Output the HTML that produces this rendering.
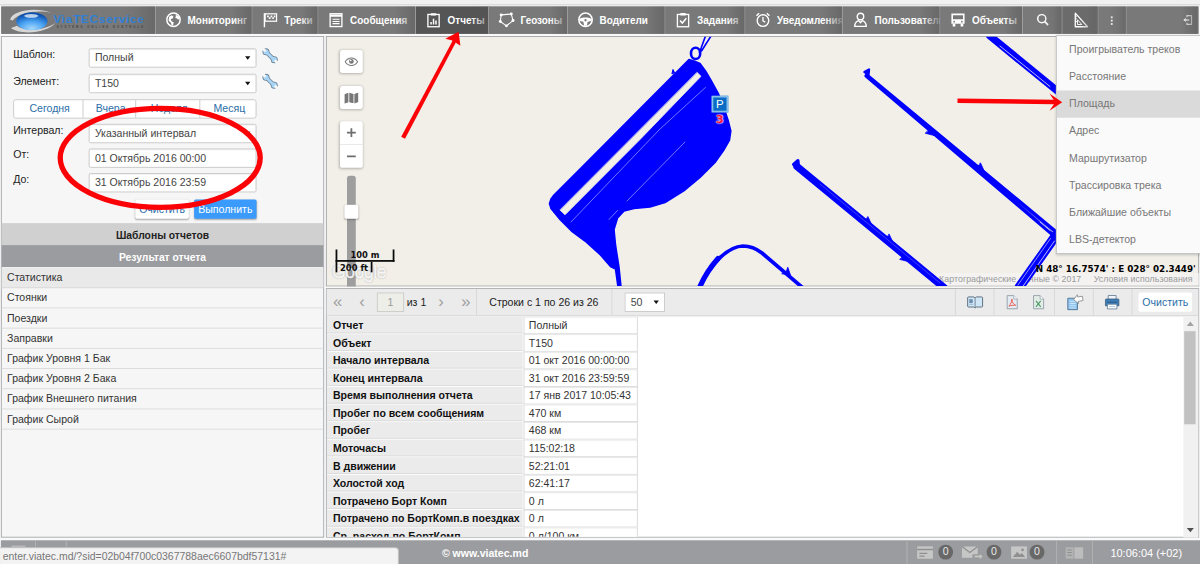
<!DOCTYPE html>
<html lang="ru"><head><meta charset="utf-8"><title>ViaTEC service</title>
<style>
html,body{margin:0;padding:0;width:1200px;height:564px;overflow:hidden;background:#f1f1f1}
#w{position:absolute;left:0;top:0;width:1366px;height:642px;transform:scale(.87848);transform-origin:0 0;font:12px "Liberation Sans",Arial,sans-serif;color:#333;background:#f9f9f9;overflow:hidden}
#w *{box-sizing:border-box}
.a{position:absolute}
#hd{left:1px;top:7px;width:1363px;height:31px;background:#767676;transform:translate(.5px,.45px)}
.hi{position:absolute;top:0;height:31px;border-right:1px solid #a4a4a4;background:linear-gradient(to right,#797979 0,#797979 78%,#6c6c6c 100%);color:#fff;font-weight:bold;font-size:13px;line-height:31px;overflow:hidden;white-space:nowrap}
.hi:after{content:"";position:absolute;right:0;top:0;width:20px;height:31px;background:linear-gradient(to right,rgba(108,108,108,0),rgba(108,108,108,.45) 55%,rgba(104,104,104,.8))}
.hi.act:after{background:linear-gradient(to right,rgba(84,84,84,0),rgba(84,84,84,.35) 55%,rgba(84,84,84,.7))}
.hi.opn{background:linear-gradient(to right,#6c6c6c 0,#6a6a6a 70%,#606060 100%)}
.hi.act{background:#555}
.hi svg{position:absolute;left:10px;top:5px;width:20px;height:20px}
.hi span{position:absolute;left:36px;top:0;display:inline-block;transform:scaleX(.87);transform-origin:0 50%}
#lp{left:1px;top:41px;width:368px;height:571px;border:1px solid #a3a6aa;background:#f6f6f6}
.lb{position:absolute;left:15px;transform:translateY(.3px);height:22px;line-height:22px;font-size:12px;color:#222}
.sel,.inp{position:absolute;left:101px;width:191px;height:22px;background:#fff;border:1px solid #c6c6c6;border-radius:2px;line-height:20px;padding-left:6px;color:#444;box-shadow:inset 0 1px 1px rgba(0,0,0,.07);white-space:nowrap}
.sel:after{content:"";position:absolute;right:6px;top:8px;border:3.500px solid transparent;border-top:4.500px solid #111;border-bottom:0}
.bg{position:absolute;left:15px;top:113px;width:277px;height:22px;background:#fff;border:1px solid #c6c6c6;border-radius:3px;color:#2b6ea8;line-height:20px;font-size:12px}
.bg i{position:absolute;top:0;height:20px;font-style:normal;text-align:center;padding-left:3px;border-right:1px solid #c6c6c6}
.btn{position:absolute;height:22px;line-height:22px;text-align:center;border-radius:2px;font-size:12px;box-shadow:0 1px 2px rgba(0,0,0,.3)}
.bar{position:absolute;left:2px;width:366px;height:25px;line-height:27px;text-align:center;font-weight:bold;font-size:11.750px;overflow:hidden}
.li{position:absolute;left:2px;width:366px;height:23px;line-height:22px;padding-left:6px;border-bottom:1px solid #d9d9d9;color:#333}
#map{left:371px;top:41px;width:994px;height:285px;background:#f2efe9;border:1px solid #a0a3a7;border-bottom-color:#b2b2b2;overflow:hidden}
.mb{position:absolute;left:387px;width:26px;background:#fff;border-radius:3px;box-shadow:0 1px 3px rgba(0,0,0,.25)}
#rp{left:371px;top:328px;width:994px;height:284px;border:1px solid #a6a9ad;background:#fff;overflow:hidden}
#tb{left:372px;top:329px;width:992px;height:31px;background:#ebebeb;border-bottom:1px solid #d2d2d2}
.sp{position:absolute;top:329px;width:1px;height:30px;background:#d6d6d6}
.pg{position:absolute;top:331px;height:26px;line-height:26px;color:#a0a0a0;font-size:19px}
.r{position:absolute;left:0;height:20px;line-height:20px;width:354px}
.r b{position:absolute;left:0;top:0;width:223px;height:19px;background:#ebebeb;padding-left:7px;border-bottom:1px solid #dadada;color:#111;line-height:20px}
.r u{position:absolute;left:224px;top:0;width:130px;height:19.500px;background:#fff;padding-left:5px;text-decoration:none;border:1px solid #d6d6d6;border-top-color:#e4e4e4;color:#333;line-height:18px}
#bb{left:1px;top:615px;width:1366px;height:28px;background:#9b9c9f;color:#fff}
#mn{left:1202px;top:40px;width:166px;height:249px;background:#fafafa;border:1px solid #bfbfbf;box-shadow:0 1px 3px rgba(0,0,0,.2);color:#777;font-size:12px}
#mn div{position:absolute;left:0;width:166px;height:31px;line-height:31px;padding-left:14px}
</style></head><body>
<div id="w">
<div class="a" style="left:0;top:0;width:1366px;height:5.600px;background:#f1f1f1;border-bottom:1px solid #cdcdcd"></div>
<div class="a" id="hd">
<div class="hi" style="left:0px;width:176px"><svg style="left:5px;top:0;width:66px;height:30px" viewBox="0 0 66 30">
<defs><radialGradient id="lg" cx="50%" cy="90%" r="80%"><stop offset="0" stop-color="#a6d8ff"/><stop offset=".5" stop-color="#4aa3f2"/><stop offset="1" stop-color="#0a50b0"/></radialGradient></defs>
<path d="M5 15C7 4 35 0 52 7 37 3.5 14 6.5 8 16z" fill="#d6d6d6"/><path d="M6 24.500c9 8 42 6.5 51-6.5-8 9-37 11-44 4z" fill="#d6d6d6"/>
<ellipse cx="29.8" cy="16.8" rx="17.8" ry="10.3" fill="url(#lg)"/><ellipse cx="29" cy="10.6" rx="8" ry="2.2" fill="#fff" opacity=".7"/></svg>
<span style="left:58.500px;top:0;font-size:12px;letter-spacing:.7px;color:#2f80d6;font-weight:bold;transform:scaleX(1.130)">ViaTECservice</span>
<span style="left:63px;top:7.500px;font-size:3.100px;letter-spacing:2.400px;color:#2e2e2e;opacity:.72;transform:none">SYSTEMS ONLINE KONTROLE</span></div>
<div class="hi" style="left:176px;width:110px"><svg style="left:10px" viewBox="0 0 20 20"><circle cx="10" cy="10" r="7.6" fill="none" stroke="#fff" stroke-width="1.7"/><path d="M5 6.5 8 5l2 1.5-1 2.2-2.2.6L8 12l2.2 1-.6 3.2L8 17l-1-3.6-2.6-2.2zM12.5 4.2l3 1.5 1.5 3-1.8 1.2-1.4-1.5-1.8-.4.6-1.8z" fill="#fff"/></svg><span>Мониторинг</span></div>
<div class="hi" style="left:286px;width:75px"><svg style="left:10px" viewBox="0 0 20 20"><path d="M3.5 2.5v16" stroke="#fff" stroke-width="1.6" fill="none"/><rect x="4.3" y="3.3" width="13" height="8.4" fill="none" stroke="#fff" stroke-width="1.4"/><path d="M6.5 5.2h2v2h-2zM10.5 5.2h2v2h-2zM14.2 5.2h1.8v2h-1.8zM8.5 7.2h2v2h-2zM12.5 7.2h1.8v2h-1.8z" fill="#fff"/></svg><span>Треки</span></div>
<div class="hi" style="left:361px;width:111px"><svg style="left:10px" viewBox="0 0 20 20"><rect x="3.3" y="3.2" width="13.4" height="14.6" fill="none" stroke="#fff" stroke-width="1.5"/><path d="M3.3 5.4h13.4" stroke="#fff" stroke-width="2.6"/><path d="M6 9.5h8M6 12h8M6 14.5h8" stroke="#fff" stroke-width="1.3"/></svg><span>Сообщения</span></div>
<div class="hi act" style="left:472px;width:83px"><svg style="left:10px" viewBox="0 0 20 20"><rect x="3.6" y="4" width="12.8" height="14" fill="none" stroke="#fff" stroke-width="1.5"/><path d="M7 2.6h6v2.6H7z" fill="#fff"/><path d="M7.2 15.5v-3M10 15.5V9M12.8 15.5v-4.5" stroke="#fff" stroke-width="1.7"/></svg><span>Отчеты</span></div>
<div class="hi" style="left:555px;width:90px"><svg style="left:10px" viewBox="0 0 20 20"><path d="M4 4.5 15.5 3.5 17.5 11 10 17 3 12z" fill="none" stroke="#fff" stroke-width="1.2"/><g fill="#fff"><circle cx="4" cy="4.5" r="1.7"/><circle cx="15.5" cy="3.5" r="1.7"/><circle cx="17.5" cy="11" r="1.7"/><circle cx="10" cy="17" r="1.7"/><circle cx="3" cy="12" r="1.7"/></g></svg><span>Геозоны</span></div>
<div class="hi" style="left:645px;width:111px"><svg style="left:10px" viewBox="0 0 20 20"><circle cx="10" cy="10" r="7.6" fill="none" stroke="#fff" stroke-width="1.8"/><path d="M3 9.2c4-2.2 10-2.2 14 0l-.3 2.2-4.2.8-1 4.6h-3l-1-4.6-4.2-.8z" fill="#fff"/><circle cx="10" cy="10.6" r="1.3" fill="#777"/></svg><span>Водители</span></div>
<div class="hi" style="left:756px;width:91px"><svg style="left:10px" viewBox="0 0 20 20"><rect x="3.6" y="4" width="12.8" height="14" fill="none" stroke="#fff" stroke-width="1.5"/><path d="M7 2.4h6v2.8H7z" fill="#fff"/><path d="M6.6 11l2.6 2.8 4.6-5.4" fill="none" stroke="#fff" stroke-width="1.7"/></svg><span>Задания</span></div>
<div class="hi" style="left:847px;width:111px"><svg style="left:10px" viewBox="0 0 20 20"><circle cx="10" cy="11" r="6.6" fill="none" stroke="#fff" stroke-width="1.6"/><path d="M10 7v4.3l2.6 1.6" fill="none" stroke="#fff" stroke-width="1.5"/><path d="M2.6 5.4 5.6 2.6M17.4 5.4 14.4 2.6" stroke="#fff" stroke-width="1.7"/></svg><span>Уведомления</span></div>
<div class="hi" style="left:958px;width:111px"><svg style="left:10px" viewBox="0 0 20 20"><circle cx="10" cy="6.4" r="3.7" fill="none" stroke="#fff" stroke-width="1.6"/><path d="M3.4 17.6c0-4.4 3-6.4 4.6-6.6l2 2.4 2-2.4c1.6.2 4.6 2.2 4.6 6.600z" fill="none" stroke="#fff" stroke-width="1.6" stroke-linejoin="round"/></svg><span>Пользователи</span></div>
<div class="hi" style="left:1069px;width:94px"><svg style="left:10px" viewBox="0 0 20 20"><path d="M2.5 3h15v11.500h-15z" fill="#fff"/><path d="M4.3 5h11.400v4.600H4.300z" fill="#777"/><circle cx="5.6" cy="12.2" r="1" fill="#777"/><circle cx="14.4" cy="12.2" r="1" fill="#777"/><path d="M4 14.500h3v3.200H4zM13 14.500h3v3.200h-3z" fill="#fff"/></svg><span>Объекты</span></div>
<div class="hi" style="left:1163px;width:45px"><svg style="left:13px" viewBox="0 0 20 20"><circle cx="8.4" cy="8.8" r="4.6" fill="none" stroke="#fff" stroke-width="1.7"/><path d="M11.8 12.2 15.6 16" stroke="#fff" stroke-width="2.1"/></svg></div>
<div class="hi opn" style="left:1208px;width:41px"><svg style="left:11px" viewBox="0 0 20 20"><path d="M3.5 2.500v15.500h14z" fill="none" stroke="#fff" stroke-width="1.5" stroke-linejoin="round"/><path d="M6 10v5.500h5z" fill="none" stroke="#fff" stroke-width="1.1"/><path d="M3.5 6h2M3.5 9h2M3.5 12h2" stroke="#fff" stroke-width="1"/></svg></div>
<div class="hi" style="left:1249px;width:32px"><svg style="left:6px" viewBox="0 0 20 20"><g fill="#fff"><rect x="8" y="6.2" width="2.1" height="2.1"/><rect x="8" y="10" width="2.1" height="2.1"/><rect x="8" y="13.8" width="2.1" height="2.1"/></g></svg></div>
<div class="hi" style="left:1281px;width:82px"><svg style="left:58px" viewBox="0 0 20 20"><g transform="translate(1.8 1.6) scale(.85)"><path d="M10.5 6.500V4.500h6v11.500h-6v-2" fill="none" stroke="#fff" stroke-width="1.6"/><path d="M13.5 10.200H7.5" stroke="#fff" stroke-width="1.8"/><path d="M9 7.4 5.5 10.200l3.5 2.800z" fill="#fff"/></g></svg></div>
</div>
<div class="a" id="lp"></div>
<div class="lb" style="top:51px">Шаблон:</div><div class="sel" style="top:55px">Полный</div><svg class="a" style="left:298px;top:54px;width:20px;height:20px" viewBox="0 0 20 20"><g stroke="#6d8293" stroke-width="5" stroke-linecap="butt"><path d="M5 5.2 14 14" /></g><circle cx="4.8" cy="5" r="4" fill="#6d8293"/><circle cx="14.2" cy="14" r="4" fill="#6d8293"/><path d="M5 5.2 14 14" stroke="#a8d5f6" stroke-width="3.2"/><circle cx="4.8" cy="5" r="3" fill="#a8d5f6"/><circle cx="14.2" cy="14" r="3" fill="#a8d5f6"/><path d="M-1 -1 2.4 .2 5.2 3.6 3.4 5.4 0 2.600zM20 20 16.6 18.8 13.8 15.4 15.6 13.6 19 16.400z" fill="#f6f6f6"/></svg>
<div class="lb" style="top:81px">Элемент:</div><div class="sel" style="top:84px">T150</div><svg class="a" style="left:298px;top:83px;width:20px;height:20px" viewBox="0 0 20 20"><g stroke="#6d8293" stroke-width="5" stroke-linecap="butt"><path d="M5 5.2 14 14" /></g><circle cx="4.8" cy="5" r="4" fill="#6d8293"/><circle cx="14.2" cy="14" r="4" fill="#6d8293"/><path d="M5 5.2 14 14" stroke="#a8d5f6" stroke-width="3.2"/><circle cx="4.8" cy="5" r="3" fill="#a8d5f6"/><circle cx="14.2" cy="14" r="3" fill="#a8d5f6"/><path d="M-1 -1 2.4 .2 5.2 3.6 3.4 5.4 0 2.600zM20 20 16.6 18.8 13.8 15.4 15.6 13.6 19 16.400z" fill="#f6f6f6"/></svg>
<div class="bg"><i style="left:0;width:79px">Сегодня</i><i style="left:79px;width:60px">Вчера</i><i style="left:139px;width:73px">Неделя</i><i style="left:212px;width:63px;border:0">Месяц</i></div>
<div class="lb" style="top:137px">Интервал:</div><div class="sel" style="top:141px">Указанный интервал</div>
<div class="lb" style="top:165px">От:</div><div class="inp" style="top:169px">01 Октябрь 2016 00:00</div>
<div class="lb" style="top:193px">До:</div><div class="inp" style="top:197px">31 Октябрь 2016 23:59</div>
<div class="btn" style="left:154px;top:227px;width:61px;background:#fff;color:#2b6ea8">Очистить</div>
<div class="btn" style="left:221px;top:227px;width:71px;background:#3a9bfc;color:#fff">Выполнить</div>
<div class="bar" style="top:254px;background:#d1d0d0;color:#222">Шаблоны отчетов</div>
<div class="bar" style="top:279px;background:#9b9c9f;color:#fff">Результат отчета</div>
<div class="li" style="top:305px;background:#e9e9e9">Статистика</div>
<div class="li" style="top:328px">Стоянки</div>
<div class="li" style="top:351px">Поездки</div>
<div class="li" style="top:374px">Заправки</div>
<div class="li" style="top:397px">График Уровня 1 Бак</div>
<div class="li" style="top:420px">График Уровня 2 Бака</div>
<div class="li" style="top:443px">График Внешнего питания</div>
<div class="li" style="top:466px">График Сырой</div>
<div class="a" id="map"></div>
<div class="a" style="left:1066px;top:311px;width:299px;height:14px;background:rgba(245,245,245,.7)"></div>
<div class="a" style="left:1069px;top:312px;font:10px 'Liberation Sans',sans-serif;color:#9a9a9a;white-space:nowrap;letter-spacing:.07px">Картографические данные © 2017 &nbsp;&nbsp;&nbsp;&nbsp;Условия использования</div>
<svg class="a" style="left:0;top:0;width:1366px;height:642px" viewBox="0 0 1200 564">
<defs><clipPath id="mc"><rect x="326.5" y="36.8" width="874" height="249.2"/></clipPath></defs>
<g clip-path="url(#mc)" fill="none" stroke="#0000ff" stroke-linecap="round" stroke-linejoin="round">
<path d="M689 59.5 694 61 700 63.5 705.5 71 710.8 80 718.5 94 724 108 728 120 730.8 131 729.5 140 723.5 150.5 715 162.5 700 177.5 685 190 665 202.5 650 207 634 208.4 624 211 617.5 218 614 229.5 615.5 245 619 267.5 621 287 618 287 615.5 269 610.5 266.5 600.5 255 595.5 250.5 585 241 571.5 231 560 219.5 551 208.5 549.5 203.5 551 199 554 195 579 170z" fill="#0000ff" stroke-width="1.6"/>
<path d="M697.2 72.6 701 76.3 640.5 139 565 214.8 560.2 210.200z" fill="#f2efe9" stroke="#f2efe9" stroke-width=".8"/>
<path d="M705.5 87.4 659 130 571 222M685 142 627 201M617.5 210.5 609 219.5" stroke="#a5a5ff" stroke-width=".7"/>
<ellipse cx="695.6" cy="53.4" rx="4.6" ry="5.6" stroke-width="2.6"/>
<path d="M699.5 52.5 705.5 36M701.5 51 711 36" stroke-width="1.6"/>
<path d="M672 73.500l1-4 1.5 3z" fill="#0000ff" stroke-width="1"/>
<path d="M990 36 1058 91.5" stroke-width="7.4"/>
<path d="M866.8 75.2 1058.4 233.800M866.2 75.8 1055.6 237.2" stroke-width="3.6"/>
<path d="M1055.5 236 1019.5 287" stroke-width="9.6"/>
<path d="M864.5 72l4.5-2.5-.5 5z" fill="#0000ff" stroke-width="2.4"/>
<path d="M797 166.5 944 287.5" stroke-width="7.4"/>
<path d="M793.5 164.500l4.5-4 .5 5.500z" fill="#0000ff" stroke-width="3"/>
<path d="M699 288C712 262 728 246.5 743 246 750 246 755 247.5 762 253L803 288" stroke-width="3.7"/>
<path d="M699.3 288C704 277 710.5 267 718 258.5" stroke-width="5.2"/><path d="M790.5 275 787.8 267.2 786.2 271.6 782 273.600z" fill="#0000ff" stroke-width=".8"/>
<g stroke="#7070ff" stroke-width=".55"><path d="M1000 46 1050 86.500M1040 222 1050 230.500M1054.5 241 1022.5 287" stroke="#c9c9ff" stroke-width=".9"/><path d="M1050.5 238.5 1018 285" stroke="#c9c9ff" stroke-width=".7"/><path d="M820 184 940 283"/></g>
<g fill="#0000ff" stroke-width=".8"><path d="M928.3 130.7 934.1 135.5 925.5 133.3zM978.5 166.3 984.3 171.2 980.6 163.1zM866.0 220.1 871.8 224.8 868.0 216.8zM887.2 237.5 893.0 242.3 889.2 234.3zM902.8 256.8 908.6 261.6 900.0 259.5z"/></g>
</g></svg>
<div class="mb" style="top:57px;height:26px"><svg class="a" style="left:5px;top:7px;width:16px;height:12.500px" viewBox="0 0 18 14"><path d="M1 7c4-6.5 12-6.5 16 0-4 6.5-12 6.5-16 0z" fill="none" stroke="#777" stroke-width="1.3"/><circle cx="9" cy="6.6" r="3" fill="#777"/><circle cx="8.2" cy="5.6" r="1" fill="#fff"/></svg></div>
<div class="mb" style="top:98px;height:26px"><svg class="a" style="left:5px;top:7px;width:16px;height:13px" viewBox="0 0 16 13"><path d="M0 2.2 4.6.6v10.800L0 13zM5.6.6 10.4 2v10.600L5.6 11.400zM11.4 2 16 .4v10.800l-4.6 1.600z" fill="#777"/></svg></div>
<div class="mb" style="top:138px;height:53px"><div class="a" style="left:0;top:26px;width:26px;height:1px;background:#e6e6e6"></div><div class="a" style="left:8px;top:12px;width:10px;height:2px;background:#6e6e6e"></div><div class="a" style="left:12px;top:8px;width:2px;height:10px;background:#6e6e6e"></div><div class="a" style="left:8px;top:39px;width:10px;height:2px;background:#6e6e6e"></div></div>
<div class="a" style="left:395px;top:200px;width:10px;height:126px;background:#9e9e9e;border-radius:3px 3px 0 0"></div>
<div class="a" style="left:392px;top:233px;width:16px;height:16px;background:#fff;border-radius:2px;box-shadow:0 1px 2px rgba(0,0,0,.25)"></div>
<div class="a" style="left:378px;top:298px;font:20px/24px 'Liberation Sans',sans-serif;letter-spacing:-.5px;color:rgba(255,255,255,.85);-webkit-text-stroke:.5px rgba(255,255,255,.85);text-shadow:0 0 2px rgba(0,0,0,.42)">Google</div>
<div class="a" style="left:382px;top:284px;width:67px;height:14px;border:2px solid #0a0a0a;border-top:0"></div><div class="a" style="left:382px;top:298px;width:42px;height:12px;border-left:2px solid #0a0a0a;border-right:2px solid #0a0a0a"></div>
<div class="a" style="left:384px;top:284px;width:63px;text-align:center;font:bold 9.500px/13px 'DejaVu Sans',Verdana,sans-serif;color:#111">100 m</div><div class="a" style="left:384px;top:298px;width:38px;text-align:center;font:bold 9.500px/13px 'DejaVu Sans',Verdana,sans-serif;color:#111">200 ft</div>
<div class="a" style="left:810px;top:109px;width:19px;height:19px;background:#0b6bc5;border:2px solid #86bfeb;color:#fff;font:13px 'Liberation Sans',sans-serif;line-height:15px;text-align:center">P</div>
<div class="a" style="left:815px;top:129px;font:bold 12.500px/14px 'DejaVu Sans',sans-serif;color:#f0134a;-webkit-text-stroke:.3px #f0134a;text-shadow:0 0 1px #fff,0 0 1px #fff,0 0 2px #fff,0 0 2px #fff">3</div>
<div class="a" style="left:1179px;top:300.500px;font:bold 10px 'DejaVu Sans',Verdana,sans-serif;color:#000;white-space:nowrap">N 48° 16.7574' : E 028° 02.3449'</div>
<div class="a" id="rp"></div><div class="a" id="tb"></div>
<div class="sp" style="left:542px"></div>
<div class="sp" style="left:696px"></div>
<div class="sp" style="left:1087px"></div>
<div class="sp" style="left:1131px"></div>
<div class="sp" style="left:1200px"></div>
<div class="sp" style="left:1244px"></div>
<div class="sp" style="left:1288px"></div>
<div class="pg" style="left:379px">«</div><div class="pg" style="left:409px">‹</div><div class="pg" style="left:499px">›</div><div class="pg" style="left:525px">»</div>
<div class="a" style="left:429px;top:333px;width:31px;height:22px;border:1px solid #c9c9c9;background:#eeeee8;text-align:center;line-height:20px;color:#999">1</div>
<div class="a" style="left:463px;top:333px;line-height:22px;color:#222">из 1</div>
<div class="a" style="left:557px;top:333px;line-height:22px;color:#222;white-space:nowrap">Строки с 1 по 26 из 26</div>
<div class="sel" style="left:711px;top:333px;width:46px;border-radius:0;box-shadow:none">50</div>
<svg class="a" style="left:1100px;top:336px;width:20px;height:16px" viewBox="0 0 20 16"><path d="M1.5 3q0-1 1-1h6L10 3.2 11.5 2h6q1 0 1 1v9.500q0 1-1 1h-6L10 14.5 8.5 13.500h-6q-1 0-1-1z" fill="#cfe6f7" stroke="#5e6f7c" stroke-width="1.1"/><path d="M10 3.500v10.5" stroke="#5e6f7c" stroke-width=".9"/><rect x="3.3" y="4.6" width="4" height="4.4" fill="#6d8fae"/><path d="M3.3 10.500h4.5" stroke="#8fb0cb" stroke-width=".9"/></svg>
<svg class="a" style="left:1145px;top:335px;width:15px;height:18px" viewBox="0 0 15 18"><path d="M1.5 1.500h7.500l4 4v11h-11.500z" fill="#e3eaf1" stroke="#8f9ca8"/><path d="M9 1.500v4h4" fill="#f5f8fa" stroke="#8f9ca8" stroke-width=".8"/><path d="M3.5 13.500c2-2 3.3-5 3.3-8 .2 4 2.2 6 4.4 7-3-.3-5.5.2-7.7 1z" fill="none" stroke="#ea5a50" stroke-width="1.1"/></svg>
<svg class="a" style="left:1175px;top:335px;width:15px;height:18px" viewBox="0 0 15 18"><path d="M1.5 1.500h7.500l4 4v11h-11.500z" fill="#e3ece6" stroke="#8f9ca8"/><path d="M9 1.500v4h4" fill="#f5f8fa" stroke="#8f9ca8" stroke-width=".8"/><path d="M4.3 7.500l5.4 6.800M9.7 7.500l-5.4 6.8" stroke="#4c9c66" stroke-width="1.3"/></svg>
<svg class="a" style="left:1214px;top:334px;width:20px;height:20px" viewBox="0 0 20 20"><path d="M1.5 5.500h11v13h-11z" fill="#8fc4f0" stroke="#4d6f8f"/><path d="M3.5 9h7M3.5 11.500h7M3.5 14h7M3.5 16.500h7" stroke="#d4e9fa" stroke-width="1"/><path d="M8 6.500l5-5v2.500h5.500v5H13v2.500z" fill="#fff" stroke="#888" stroke-width=".9" transform="rotate(-8 13 6)"/></svg>
<svg class="a" style="left:1257px;top:335px;width:18px;height:18px" viewBox="0 0 20 20"><path d="M5 1.500h10v6H5z" fill="#eef4f9" stroke="#5b7690"/><path d="M1.5 7q0-1 1-1h15q1 0 1 1v7.500h-17z" fill="#3f7fb8" stroke="#355a7e"/><path d="M3.5 10h13" stroke="#2a5f92" stroke-width="1.5"/><path d="M4 12.500h12v6H4z" fill="#fff" stroke="#5b7690"/><path d="M6 15.500h8" stroke="#9dbfdc"/></svg>
<div class="a" style="left:1296px;top:333px;width:61px;height:22px;background:#fff;border-radius:2px;color:#2b6ea8;text-align:center;line-height:22px;font-size:12px">Очистить</div>
<div class="a" style="left:372px;top:360px;width:975px;height:251px;overflow:hidden"><div class="a" style="left:0;top:0;transform:translateY(.45px)">
<div class="r" style="top:0px"><b>Отчет</b><u>Полный</u></div>
<div class="r" style="top:20px"><b>Объект</b><u>T150</u></div>
<div class="r" style="top:40px"><b>Начало интервала</b><u>01 окт 2016 00:00:00</u></div>
<div class="r" style="top:60px"><b>Конец интервала</b><u>31 окт 2016 23:59:59</u></div>
<div class="r" style="top:80px"><b>Время выполнения отчета</b><u>17 янв 2017 10:05:43</u></div>
<div class="r" style="top:100px"><b>Пробег по всем сообщениям</b><u>470 км</u></div>
<div class="r" style="top:120px"><b>Пробег</b><u>468 км</u></div>
<div class="r" style="top:140px"><b>Моточасы</b><u>115:02:18</u></div>
<div class="r" style="top:160px"><b>В движении</b><u>52:21:01</u></div>
<div class="r" style="top:180px"><b>Холостой ход</b><u>62:41:17</u></div>
<div class="r" style="top:200px"><b>Потрачено Борт Комп</b><u>0 л</u></div>
<div class="r" style="top:220px"><b>Потрачено по БортКомп.в поездках</b><u>0 л</u></div>
<div class="r" style="top:240px"><b>Ср. расход по БортКомп.</b><u>0 л/100 км</u></div>
</div></div>
<div class="a" style="left:1347px;top:360px;width:17px;height:252px;background:#f1f1f1"></div>
<div class="a" style="left:1348px;top:377px;width:13px;height:106px;background:#c1c1c1"></div>
<div class="a" style="left:1351px;top:366px;border:4.500px solid transparent;border-bottom:5px solid #a3a3a3;border-top:0"></div>
<div class="a" style="left:1351px;top:601px;border:4.500px solid transparent;border-top:5px solid #505050;border-bottom:0"></div>
<div class="a" id="bb"></div>
<div class="a" style="left:503px;top:616px;line-height:28px;font-weight:bold;color:#fff;font-size:12px">© www.viatec.md</div>
<div class="a" style="left:1032px;top:616px;width:1px;height:26px;background:#b4b4b4"></div>
<div class="a" style="left:1202px;top:616px;width:1px;height:26px;background:#b4b4b4"></div>
<div class="a" style="left:1243px;top:616px;width:1px;height:26px;background:#b4b4b4"></div>
<svg class="a" style="left:1043px;top:621px;width:20px;height:16px" viewBox="0 0 20 16"><rect x="1" y="1" width="18" height="14" fill="#c6c6c6"/><path d="M1 4.500h18" stroke="#8f8f8f" stroke-width="1.5"/><path d="M3.5 9h9M3.5 12h6" stroke="#8f8f8f" stroke-width="1.3"/></svg><div class="a" style="left:1068px;top:620px;width:17px;height:17px;border-radius:9px;background:#686868;color:#e8e8e8;text-align:center;line-height:17px;font-size:12px">0</div>
<svg class="a" style="left:1094px;top:621px;width:26px;height:16px" viewBox="0 0 26 16"><path d="M1 1h18v9h-6v4H1z" fill="#c6c6c6"/><path d="M1 1l9 7 9-7" fill="none" stroke="#8f8f8f" stroke-width="1.4"/><path d="M15 11h6V8.500l4 4-4 4V14h-6z" fill="#c6c6c6" stroke="#8f8f8f" stroke-width=".6"/></svg><div class="a" style="left:1123px;top:620px;width:17px;height:17px;border-radius:9px;background:#686868;color:#e8e8e8;text-align:center;line-height:17px;font-size:12px">0</div>
<svg class="a" style="left:1150px;top:621px;width:20px;height:16px" viewBox="0 0 20 16"><rect x="1" y="1" width="18" height="14" fill="#c6c6c6"/><path d="M3 13l5-6 3 3.5 2-2 4 4.500z" fill="#8f8f8f"/><circle cx="14" cy="5" r="1.5" fill="#8f8f8f"/></svg><div class="a" style="left:1172px;top:620px;width:17px;height:17px;border-radius:9px;background:#686868;color:#e8e8e8;text-align:center;line-height:17px;font-size:12px">0</div>
<svg class="a" style="left:1212px;top:622px;width:22px;height:15px" viewBox="0 0 22 15"><rect x="1" y="1" width="9" height="13" fill="#b3b3b3"/><rect x="11" y="1" width="10" height="13" fill="#bdbdbd"/><path d="M3 4h5M3 7h5M3 10h5" stroke="#8f8f8f" stroke-width="1.2"/></svg>
<div class="a" style="left:1264px;top:616px;line-height:28px;color:#fff;font-size:12.500px;white-space:nowrap">10:06:04 (+02)</div>
<div class="a" style="left:13px;top:621px;width:16px;height:2px;background:#b9b9bb"></div><div class="a" style="left:40px;top:615px;width:1px;height:8px;background:#b4b4b4"></div><div class="a" style="left:75px;top:615px;width:1px;height:8px;background:#b4b4b4"></div>
<div class="a" style="left:-1px;top:623px;width:455px;height:22px;background:#f3f3f3;border:1px solid #c4c4c4;border-radius:0 4px 0 0;color:#777;font:11.900px 'Liberation Sans',sans-serif;line-height:19px;padding-left:3px;white-space:nowrap;letter-spacing:0">enter.viatec.md/?sid=02b04f700c0367788aec6607bdf57131#</div>
<div class="a" id="mn">
<div style="top:0px">Проигрыватель треков</div>
<div style="top:31px">Расстояние</div>
<div style="top:62px;background:#dadada">Площадь</div>
<div style="top:93px">Адрес</div>
<div style="top:124px">Маршрутизатор</div>
<div style="top:155px">Трассировка трека</div>
<div style="top:186px">Ближайшие объекты</div>
<div style="top:217px">LBS-детектор</div>
</div>
<svg class="a" style="left:0;top:0;width:1366px;height:642px" viewBox="0 0 1200 564">
<ellipse cx="160.2" cy="157.8" rx="100" ry="49.5" fill="none" stroke="#fb0207" stroke-width="5.3"/>
<path d="M401.2 136.7 405 138.8 456 42 453 40z" fill="#fb0207"/>
<path d="M458.6 31.8 445.3 38.8 451.5 40.3 455.5 42.5 460.4 45.800z" fill="#fb0207"/>
<path d="M957.5 98.4 957.5 103 1054 104.3 1054 99.800z" fill="#fb0207"/>
<path d="M1062.2 102.2 1049.5 93.6 1053.8 100 1053.8 104.5 1049.5 110.700z" fill="#fb0207"/>
</svg>
</div>
</body></html>
